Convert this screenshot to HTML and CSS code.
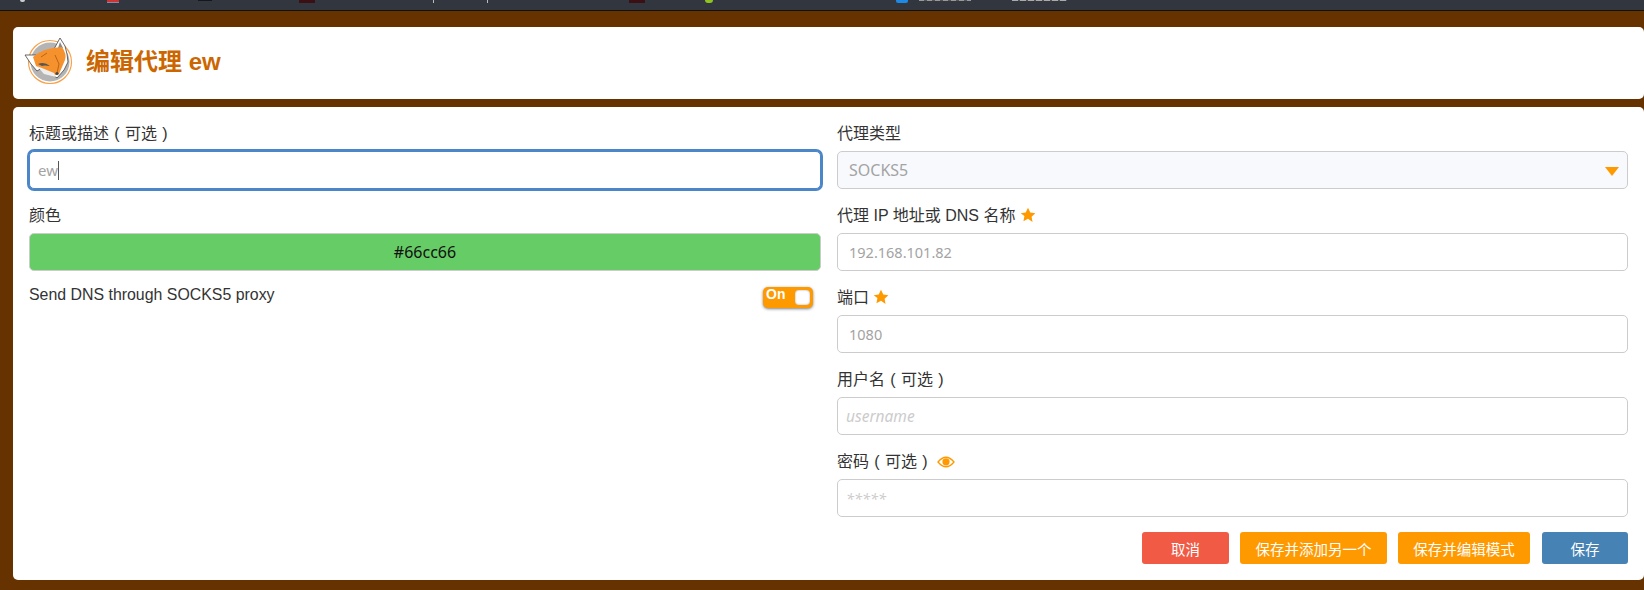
FILE: index.html
```html
<!DOCTYPE html>
<html lang="zh">
<head>
    <meta charset="UTF-8">
    <title>编辑代理 ew</title>
    <link rel="stylesheet" href="styles.css">
</head>
<body>
    <div class="tabstrip">
        <i class="tab-bit bit-1"></i>
        <i class="tab-bit bit-2"></i>
        <i class="tab-bit bit-3"></i>
        <i class="tab-bit bit-4"></i>
        <i class="tab-bit bit-5"></i>
        <i class="tab-bit bit-6"></i>
        <i class="tab-bit bit-7"></i>
        <i class="tab-bit bit-8"></i>
        <i class="tab-bit bit-9"></i>
        <i class="tab-bit bit-10"></i>
        <i class="tab-bit bit-11"></i>
    </div>

    <header class="card title-card">
        <svg class="logo" viewBox="0 0 50 46" width="50" height="46">
            <circle cx="26" cy="24" r="21.500" fill="#fff" stroke="#f7a24b" stroke-width="1.200"/>
            <circle cx="26" cy="24" r="19.500" fill="#b4b4b4"/>
            <path d="M30 11 L36 0 L41 8 L43 16 L44 24 L40 32 L33 40 L28 36 Z" fill="#fff" stroke="#444" stroke-width=".8"/>
            <path d="M34 10 L36 4 L39 10 Z" fill="#888"/>
            <path d="M1 17 L12 17 L18 30 L13 33 L7 26 Z" fill="#fff" stroke="#444" stroke-width=".8"/>
            <path d="M9 19 Q18 10 38 9 Q43 16 41 22 L35 36 L31 37 L20 33 L12 28 Z" fill="#f5922e"/>
            <path d="M13 28 L30 35 L32 39 L20 36 Z" fill="#eee"/>
            <path d="M14 26 Q20 23 26 28 Q20 27 18 28 Z" fill="#555"/>
            <path d="M23 15 L17 19 M31 17 L35 26 L33 35" fill="none" stroke="#b8641a" stroke-width="1"/>
            <circle cx="33" cy="35.500" r="1.600" fill="#444"/>
        </svg>
        <h1>编辑代理 ew</h1>
    </header>

    <form class="card form-card">
        <div class="col">
            <div class="field">
                <label>标题或描述<span class="paren">(</span>可选<span class="paren">)</span></label>
                <div class="input focused"><span class="value ew">ew</span><span class="caret"></span></div>
            </div>
            <div class="field">
                <label>颜色</label>
                <div class="input color">#66cc66</div>
            </div>
            <div class="toggle-row">
                <span>Send DNS through SOCKS5 proxy</span>
                <span class="toggle"><b>On</b><i></i></span>
            </div>
        </div>

        <div class="col">
            <div class="field">
                <label>代理类型</label>
                <div class="input select"><span class="value wide">SOCKS5</span><i class="arrow"></i></div>
            </div>
            <div class="field">
                <label>代理 IP 地址或 DNS 名称
                    <svg class="star" viewBox="0 0 24 24" width="16" height="16"><path d="M12 1l3.400 7.200 7.600 1-5.600 5.400 1.400 7.800L12 17.700l-6.800 3.700 1.400-7.800L1 9.200l7.600-1z"/></svg>
                </label>
                <div class="input"><span class="value">192.168.101.82</span></div>
            </div>
            <div class="field">
                <label>端口
                    <svg class="star" viewBox="0 0 24 24" width="16" height="16"><path d="M12 1l3.400 7.200 7.600 1-5.600 5.400 1.400 7.800L12 17.700l-6.800 3.700 1.400-7.800L1 9.200l7.600-1z"/></svg>
                </label>
                <div class="input"><span class="value">1080</span></div>
            </div>
            <div class="field">
                <label>用户名<span class="paren">(</span>可选<span class="paren">)</span></label>
                <div class="input"><span class="placeholder">username</span></div>
            </div>
            <div class="field">
                <label>密码<span class="paren">(</span>可选<span class="paren">)</span>
                    <svg class="eye" viewBox="0 0 18 12" width="18" height="12"><path d="M1 6q8-9.500 16 0q-8 9.500-16 0z" fill="none" stroke="#f90" stroke-width="1.300"/><circle cx="9" cy="5.800" r="3.600" fill="#f90"/></svg>
                </label>
                <div class="input"><span class="placeholder stars">*****</span></div>
            </div>
            <div class="buttons">
                <button type="button" class="btn red">取消</button>
                <button type="button" class="btn orange add">保存并添加另一个</button>
                <button type="button" class="btn orange pattern">保存并编辑模式</button>
                <button type="button" class="btn blue">保存</button>
            </div>
        </div>
    </form>
</body>
</html>
```

FILE: styles.css
```css
* {
    box-sizing: border-box;
}

html, body {
    height: 590px;
    overflow: hidden;
}

body {
    margin: 0;
    padding-left: 13px;
    background-color: #663300;
    font-family: "Liberation Sans", "Noto Sans CJK SC", sans-serif;
    font-size: 16px;
    color: #333;
}

.tabstrip {
    position: relative;
    height: 11px;
    margin: 0 0 16px -13px;
    background-color: #32363e;
    border-bottom: 1px solid #111;
}

.tab-bit {
    position: absolute;
    top: 0;
    height: 3px;
}

.bit-1 { left: 20px; width: 5px; height: 2px; background: #ccc; border-radius: 0 0 3px 3px; }
.bit-2 { left: 107px; width: 12px; background: linear-gradient(#c33 60%, #88a 60%); }
.bit-3 { left: 198px; width: 14px; height: 1px; background: #15171a; }
.bit-4 { left: 299px; width: 16px; background: #3a1015; }
.bit-5 { left: 629px; width: 16px; background: #3a1015; }
.bit-6 { left: 705px; width: 8px; background: #8fc31f; border-radius: 0 0 4px 4px; }
.bit-7 { left: 896px; width: 12px; background: #1e88e5; border-radius: 0 0 2px 2px; }
.bit-8 { left: 919px; width: 52px; height: 1px; background: repeating-linear-gradient(90deg, #999 0 5px, #555 5px 8px); }
.bit-9 { left: 1012px; width: 55px; height: 1px; background: repeating-linear-gradient(90deg, #aaa 0 6px, #555 6px 8px); }
.bit-10 { left: 433px; width: 1px; background: #bbb; }
.bit-11 { left: 487px; width: 1px; background: #bbb; }

.card {
    background-color: #fff;
    border-radius: 5px;
}

.title-card {
    display: flex;
    align-items: center;
    gap: 12px;
    height: 72px;
    margin-bottom: 8px;
    padding: 0 0 4px 11px;
}

.title-card h1 {
    margin: 0 0 4px;
    font-size: 24px;
    font-weight: bold;
    color: #cc6600;
}

.form-card {
    display: grid;
    grid-template-columns: 792px 791px;
    column-gap: 16px;
    height: 473px;
    padding: 15px 0 0 16px;
}

.field {
    margin-bottom: 15px;
}

label {
    display: block;
    height: 29px;
    line-height: 24px;
}

.paren {
    display: inline-block;
    width: 16px;
    text-align: center;
}

.star {
    vertical-align: -2px;
    fill: #f90;
}

.eye {
    vertical-align: -1px;
}

.input {
    display: flex;
    align-items: center;
    height: 38px;
    padding: 0 11px;
    border: 1px solid #ccc;
    border-radius: 5px;
    background-color: #fff;
    font-family: "Noto Sans", sans-serif;
    font-size: 14.500px;
}

.value {
    color: #a3a3a3;
}

.wide {
    font-size: 16px;
}

.ew {
    font-size: 15px;
}

.placeholder {
    margin-left: -3px;
    color: #ccc;
    font-size: 15.500px;
    font-style: italic;
}

.stars {
    font-size: 14.500px;
}

.focused {
    padding: 0 8px;
    border-color: #4a86c8;
    box-shadow: 0 0 0 2px #4a86c8;
}

.caret {
    width: 1px;
    height: 19px;
    background-color: #555;
}

.color {
    justify-content: center;
    background-color: #66cc66;
    color: #111;
    font-size: 16px;
}

.select {
    justify-content: space-between;
    background-color: #f8f9fd;
}

.arrow {
    width: 0;
    height: 0;
    margin: 2px -3px 0 0;
    border-left: 7px solid transparent;
    border-right: 7px solid transparent;
    border-top: 9px solid #f90;
}

.toggle-row {
    display: flex;
    justify-content: space-between;
    align-items: flex-start;
    margin-top: -3px;
    padding-right: 8px;
    font-size: 15.900px;
    line-height: 24px;
}

.toggle {
    display: flex;
    justify-content: space-between;
    width: 50px;
    height: 21px;
    margin-top: 4px;
    padding: 0 3px;
    border-radius: 5px;
    background-color: #f90;
    box-shadow: 0 1px 3px rgba(0, 0, 0, 0.5);
    color: #fff;
    font-size: 14px;
    line-height: 14px;
}

.toggle i {
    width: 15px;
    height: 15px;
    margin-top: 3px;
    border-radius: 4px;
    background-color: #fff;
    box-shadow: inset 0 0 2px #999;
}

.buttons {
    display: flex;
    justify-content: flex-end;
    gap: 11px;
    margin-top: 1px;
}

.btn {
    width: 86px;
    height: 32px;
    padding: 0;
    border: none;
    border-radius: 3px;
    color: #fff;
    font-family: inherit;
    font-size: 14.500px;
}

.red { background-color: #f15a44; width: 87px; }
.orange { background-color: #f90; }
.blue { background-color: #4682b4; margin-left: 1px; }
.add { width: 147px; }
.pattern { width: 132px; }
```
